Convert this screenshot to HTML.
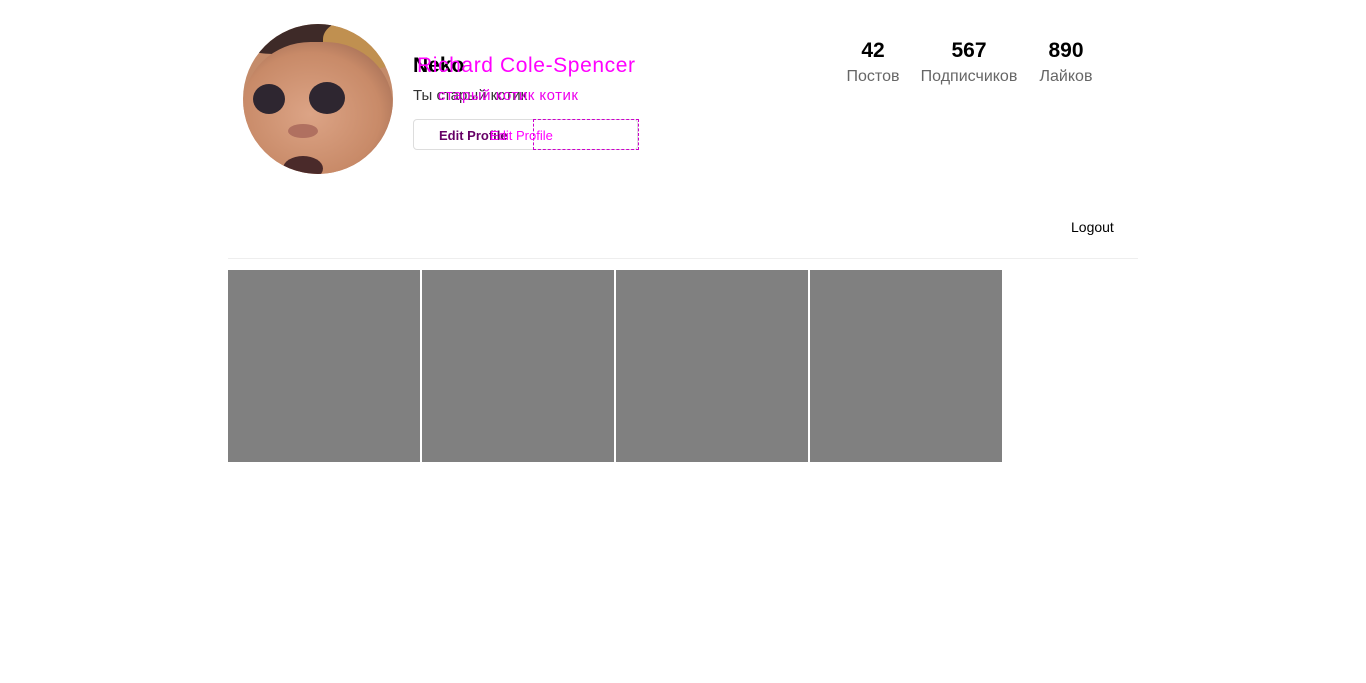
<!DOCTYPE html>
<html><head><meta charset="utf-8"><style>
body{margin:0;width:1366px;height:683px;background:#fff;font-family:"Liberation Sans","DejaVu Sans",sans-serif;position:relative;overflow:hidden}
.a{position:absolute;white-space:nowrap}
.av{position:absolute;left:243px;top:24px;width:150px;height:150px;border-radius:50%;overflow:hidden;background:#c48b6a}
.eye{position:absolute;width:30px;height:26px;border-radius:50%;background:#2e2630}
.tile{position:absolute;top:270px;width:192px;height:192px;background:#808080}
.n{font-size:21px;font-weight:bold;color:#000;text-align:center}
.l{font-size:16px;color:#666;text-align:center}
</style></head><body>
<div class="av">
 <div style="position:absolute;left:-10px;top:-10px;width:100px;height:40px;background:#3e2a28;border-radius:40%"></div>
 <div style="position:absolute;left:80px;top:-5px;width:80px;height:50px;background:#c09050;border-radius:40%"></div>
 <div style="position:absolute;left:0;top:18px;width:150px;height:145px;background:radial-gradient(ellipse at 45% 50%,#dca486,#c88a68 60%,#8a5a48);border-radius:45%"></div>
 <div class="eye" style="left:10px;top:60px;width:32px;height:30px"></div>
 <div class="eye" style="left:66px;top:58px;width:36px;height:32px"></div>
 <div style="position:absolute;left:45px;top:100px;width:30px;height:14px;background:#b07060;border-radius:50%"></div>
 <div style="position:absolute;left:40px;top:132px;width:40px;height:25px;background:#4a2a2a;border-radius:50%"></div>
</div>
<div class="a" style="left:413px;top:54px;font-size:21px;font-weight:bold;color:#000">Neko</div>
<div class="a" style="left:417px;top:54px;font-size:21px;color:#f0f;letter-spacing:0.6px">Richard Cole-Spencer</div>
<div class="a" style="left:413px;top:87px;font-size:15px;color:#333">Ты старый котик</div>
<div class="a" style="left:438px;top:87px;font-size:15px;color:#e0e;letter-spacing:0.5px">старый котик котик</div>
<div class="a" style="left:413px;top:119px;width:223px;height:29px;border:1px solid #ddd;border-radius:4px"></div>
<div class="a" style="left:533px;top:119px;width:104px;height:29px;border:1px dashed #c0c;"></div>
<div class="a" style="left:439px;top:128px;font-size:13px;font-weight:bold;color:#606">Edit Profile</div>
<div class="a" style="left:490px;top:128px;font-size:13px;color:#f0f">Edit Profile</div>
<div class="a n" style="left:843px;top:39px;width:60px">42</div>
<div class="a l" style="left:843px;top:68px;width:60px">Постов</div>
<div class="a n" style="left:919px;top:39px;width:100px">567</div>
<div class="a l" style="left:919px;top:68px;width:100px">Подписчиков</div>
<div class="a n" style="left:1036px;top:39px;width:60px">890</div>
<div class="a l" style="left:1036px;top:68px;width:60px">Лайков</div>
<div class="a" style="left:1071px;top:219px;font-size:14px;color:#000">Logout</div>
<div class="a" style="left:228px;top:258px;width:910px;height:1px;background:#eee"></div>
<div class="tile" style="left:228px"></div>
<div class="tile" style="left:422px"></div>
<div class="tile" style="left:616px"></div>
<div class="tile" style="left:810px"></div>
</body></html>
